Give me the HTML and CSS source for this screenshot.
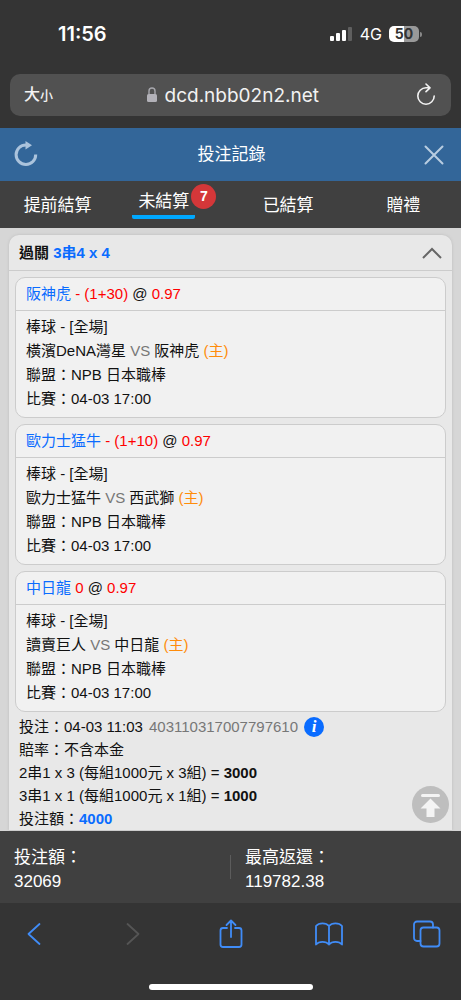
FILE: index.html
```html
<!DOCTYPE html>
<html lang="zh-Hant">
<head>
    <meta charset="UTF-8">
    <meta name="viewport" content="width=device-width, initial-scale=1.0">
    <title>投注記錄</title>
    <link rel="stylesheet" href="styles.css">
</head>
<body>
    <div class="status-bar">
        <span class="time">11:56</span>
        <div class="status-icons">
            <svg width="24" height="16" viewBox="0 0 24 16">
                <rect x="1" y="10" width="4" height="5" rx="1" fill="#fff"/>
                <rect x="7" y="7" width="4" height="8" rx="1" fill="#fff"/>
                <rect x="13" y="4" width="4" height="11" rx="1" fill="#fff"/>
                <rect x="19" y="1" width="4" height="14" rx="1" fill="#5f5f5f"/>
            </svg>
            <span class="network">4G</span>
            <span class="battery">50</span>
        </div>
    </div>
    <div class="browser-bar">
        <div class="address">
            <button class="text-size">大<small>小</small></button>
            <div class="url-group">
                <svg width="12" height="18" viewBox="0 0 12 18">
                    <path d="M3 8V5a3 3 0 0 1 6 0v3" fill="none" stroke="#a7a7ad" stroke-width="1.4"/>
                    <rect x="1" y="8" width="10" height="8" rx="1.5" fill="#b2b1b8"/>
                </svg>
                <input class="url" type="text" value="dcd.nbb02n2.net" aria-label="網址">
            </div>
            <button class="reload" aria-label="重新載入">
                <svg width="22" height="24" viewBox="0 0 22 24" fill="none" stroke="#f2f2f2" stroke-width="1.6" stroke-linecap="round" stroke-linejoin="round">
                    <path d="M19.2 13a8.2 8.2 0 1 1-8.2-8.2h3.6M11 1l4 3.8-4 3.8"/>
                </svg>
            </button>
        </div>
    </div>
    <header class="page-header">
        <button aria-label="重新整理">
            <svg width="26" height="28" viewBox="0 0 26 28">
                <path d="M22.7 13.500A9.8 9.8 0 1 1 13 3.900h2" fill="none" stroke="#abc3dc" stroke-width="3"/>
                <path d="M12.5 0 19 4.200l-6.5 4.200z" fill="#abc3dc"/>
            </svg>
        </button>
        <h1>投注記錄</h1>
        <button aria-label="關閉">
            <svg width="20" height="20" viewBox="0 0 20 20">
                <path d="M1.5 1.5l17 17M18.5 1.5l-17 17" stroke="#b9cde1" stroke-width="2" stroke-linecap="round"/>
            </svg>
        </button>
    </header>
    <nav class="tabs">
        <button>提前結算</button>
        <button class="active"><span class="tab-label">未結算</span><span class="badge">7</span></button>
        <button>已結算</button>
        <button>贈禮</button>
    </nav>
    <div class="content">
        <main class="scroll">
            <section class="ticket">
                <h2 class="ticket-title">
                    <span>過關 <span class="blue">3串4 x 4</span></span>
                    <button aria-label="收合">
                        <svg width="20" height="12" viewBox="0 0 20 12">
                            <path d="M1 11l9-9 9 9" fill="none" stroke="#666" stroke-width="2"/>
                        </svg>
                    </button>
                </h2>
                <div class="bets">
                    <article class="bet">
                        <h3><span class="blue">阪神虎</span> <span class="red">- (1+30)</span> @ <span class="red">0.97</span></h3>
                        <div class="bet-body">
                            <p>棒球 - [全場]</p>
                            <p>橫濱DeNA灣星 <span class="gray">VS</span> 阪神虎 <span class="orange">(主)</span></p>
                            <p>聯盟：NPB 日本職棒</p>
                            <p>比賽：04-03 17:00</p>
                        </div>
                    </article>
                    <article class="bet">
                        <h3><span class="blue">歐力士猛牛</span> <span class="red">- (1+10)</span> @ <span class="red">0.97</span></h3>
                        <div class="bet-body">
                            <p>棒球 - [全場]</p>
                            <p>歐力士猛牛 <span class="gray">VS</span> 西武獅 <span class="orange">(主)</span></p>
                            <p>聯盟：NPB 日本職棒</p>
                            <p>比賽：04-03 17:00</p>
                        </div>
                    </article>
                    <article class="bet">
                        <h3><span class="blue">中日龍</span> <span class="red">0</span> @ <span class="red">0.97</span></h3>
                        <div class="bet-body">
                            <p>棒球 - [全場]</p>
                            <p>讀賣巨人 <span class="gray">VS</span> 中日龍 <span class="orange">(主)</span></p>
                            <p>聯盟：NPB 日本職棒</p>
                            <p>比賽：04-03 17:00</p>
                        </div>
                    </article>
                </div>
                <div class="summary">
                    <p class="placed">
                        <span>投注：04-03 11:03</span>
                        <span class="gray">403110317007797610</span>
                        <button class="info" aria-label="詳情">i</button>
                    </p>
                    <p>賠率：不含本金</p>
                    <p>2串1 x 3 (每組1000元 x 3組) = <b>3000</b></p>
                    <p>3串1 x 1 (每組1000元 x 1組) = <b>1000</b></p>
                    <p>投注額：<b class="blue">4000</b></p>
                </div>
            </section>
        </main>
        <button class="to-top" aria-label="回頂部">
            <svg width="37" height="37" viewBox="0 0 37 37">
                <circle cx="18.5" cy="18.5" r="18.5" fill="#bebebe"/>
                <path d="M10.5 9.5h16" stroke="#f4f4f4" stroke-width="3" stroke-linecap="round"/>
                <path d="M18.5 12.5l10 10h-6V31h-8v-8.500h-6z" fill="#f4f4f4"/>
            </svg>
        </button>
    </div>
    <footer class="totals">
        <div class="total">投注額：<br>32069</div>
        <span class="divider"></span>
        <div class="total">最高返還：<br>119782.38</div>
    </footer>
    <div class="toolbar">
        <div class="toolbar-buttons">
            <button aria-label="上一頁">
                <svg width="28" height="30" viewBox="0 0 28 30"><path d="M19.500 5L8.500 15l11 10"/></svg>
            </button>
            <button class="disabled" aria-label="下一頁">
                <svg width="28" height="30" viewBox="0 0 28 30"><path d="M9.500 5l11 10-11 10"/></svg>
            </button>
            <button aria-label="分享">
                <svg width="28" height="30" viewBox="0 0 28 30"><path d="M10 9H6a2.500 2.500 0 0 0-2.500 2.500v14A2.500 2.500 0 0 0 6 28h16a2.500 2.500 0 0 0 2.500-2.500v-14A2.500 2.500 0 0 0 22 9h-4M14 18V1.500M9.500 6L14 1.500 18.500 6"/></svg>
            </button>
            <button aria-label="書籤">
                <svg width="28" height="30" viewBox="0 0 28 30"><path d="M14 7C11 3.500 4 3.500 1 7v18.500c3-3.500 10-3.500 13 0 3-3.500 10-3.500 13 0V7c-3-3.500-10-3.500-13 0zM14 7v18.500"/></svg>
            </button>
            <button aria-label="分頁">
                <svg width="28" height="30" viewBox="0 0 28 30"><rect x="7.500" y="8.500" width="19" height="19" rx="3"/><path d="M7.500 22H4a3 3 0 0 1-3-3V5.500a3 3 0 0 1 3-3h13a3 3 0 0 1 3 3v3"/></svg>
            </button>
        </div>
        <div class="home-indicator"></div>
    </div>
</body>
</html>
```

FILE: styles.css
```css
* {
    box-sizing: border-box;
}
body {
    display: flex;
    flex-direction: column;
    height: 100vh;
    margin: 0;
    background: #343434;
    color: #111;
    font-family: "Liberation Sans", "Noto Sans CJK TC", sans-serif;
    font-size: 15px;
    line-height: 24px;
}
h1, h2, h3, p {
    margin: 0;
}
button {
    padding: 0;
    border: none;
    background: none;
    color: inherit;
    font: inherit;
    cursor: pointer;
}
svg {
    display: block;
}
.blue {
    color: #0a6cff;
}
.red {
    color: #f00;
}
.gray {
    color: #777;
}
.orange {
    color: #ff8c0a;
}

/* status bar */
.status-bar {
    display: flex;
    justify-content: space-between;
    align-items: center;
    padding: 22px 42px 28px 58px;
    color: #fff;
    font-family: Inter, sans-serif;
}
.time {
    font-size: 20px;
    font-weight: 600;
}
.status-icons {
    display: flex;
    align-items: center;
    gap: 7px;
}
.network {
    font-size: 16px;
}
.battery {
    position: relative;
    width: 30px;
    height: 16px;
    border-radius: 5px;
    background: linear-gradient(90deg, #fff 50%, #999 50%);
    color: #333;
    font-size: 14px;
    font-weight: 700;
    line-height: 16px;
    text-align: center;
}
.battery::after {
    content: "";
    position: absolute;
    top: 6px;
    right: -3px;
    width: 2px;
    height: 5px;
    border-radius: 0 2px 2px 0;
    background: #888;
}

/* address bar */
.browser-bar {
    padding: 0 10px 12px;
}
.address {
    display: flex;
    justify-content: space-between;
    align-items: center;
    height: 42px;
    padding: 0 14px;
    border-radius: 10px;
    background: #515151;
    color: #f2f2f2;
}
.text-size {
    font-size: 16px;
    font-weight: 500;
}
.text-size small {
    font-size: 13px;
}
.url-group {
    display: flex;
    align-items: center;
    gap: 7px;
}
.url {
    width: 158px;
    padding: 0;
    border: none;
    outline: none;
    background: none;
    color: inherit;
    font-family: Inter, sans-serif;
    font-size: 19px;
}

/* page header and tabs */
.page-header {
    display: flex;
    justify-content: space-between;
    align-items: center;
    height: 53px;
    padding: 0 17px 0 13px;
    background: #336699;
    color: #fff;
}
.page-header h1 {
    font-size: 17px;
    font-weight: 400;
}
.tabs {
    display: grid;
    grid-template-columns: repeat(4, 1fr);
    height: 47px;
    background: #404040;
    color: #fff;
    font-size: 17px;
}
.tabs button {
    padding-top: 3px;
}
.tabs .active {
    display: flex;
    justify-content: center;
    padding-left: 3px;
}
.tab-label {
    height: 35px;
    padding: 6px 6px 0;
    border-bottom: 4px solid #00a8ff;
    border-radius: 2px;
}
.badge {
    width: 25px;
    height: 25px;
    margin-left: -4px;
    border-radius: 50%;
    background: #d43739;
    font-size: 14px;
    font-weight: 700;
    line-height: 25px;
}

/* bet list */
.content {
    position: relative;
    flex: 1;
    min-height: 0;
    background: #d6d6d6;
}
.scroll {
    height: 100%;
    padding: 7px 9px 0;
    overflow-y: auto;
    scrollbar-width: none;
}
.ticket {
    border-radius: 10px 10px 0 0;
    background: #e8e8e8;
    box-shadow: 0 0 3px #bbb;
}
.ticket-title {
    display: flex;
    justify-content: space-between;
    align-items: center;
    height: 36px;
    padding: 0 10px;
    border-bottom: 1px solid #ccc;
    font-size: 15px;
}
.bets {
    display: grid;
    gap: 6px;
    padding: 6px 6px 3px;
}
.bet {
    border: 1px solid #ccc;
    border-radius: 10px;
    background: #f1f1f1;
}
.bet h3 {
    padding: 4px 10px;
    border-bottom: 1px solid #ccc;
    font-size: 15px;
    font-weight: 400;
}
.bet-body {
    padding: 4px 10px 6px;
}
.summary {
    padding: 0 10px;
    line-height: 23px;
}
.summary p {
    white-space: nowrap;
}
.placed {
    display: flex;
    align-items: center;
    gap: 6px;
}
.info {
    width: 20px;
    height: 20px;
    border-radius: 50%;
    background: #0a6cff;
    color: #fff;
    font: italic bold 17px/20px "Liberation Serif", serif;
}
.to-top {
    position: absolute;
    right: 12px;
    bottom: 8px;
}

/* totals */
.totals {
    display: flex;
    align-items: center;
    height: 72px;
    background: #404040;
    color: #fff;
    font-size: 17px;
}
.total {
    flex: 1;
    padding: 6px 14px 0;
}
.divider {
    width: 1px;
    height: 24px;
    background: #5c5c5c;
}

/* browser toolbar */
.toolbar {
    height: 97px;
    padding: 16px 20px 0;
}
.toolbar-buttons {
    display: flex;
    justify-content: space-between;
}
.toolbar svg {
    fill: none;
    stroke: #408cf7;
    stroke-width: 1.8;
    stroke-linecap: round;
    stroke-linejoin: round;
}
.toolbar .disabled svg {
    stroke: #555;
}
.home-indicator {
    width: 164px;
    height: 6px;
    margin: 35px auto 0;
    border-radius: 3px;
    background: #fff;
}
```
